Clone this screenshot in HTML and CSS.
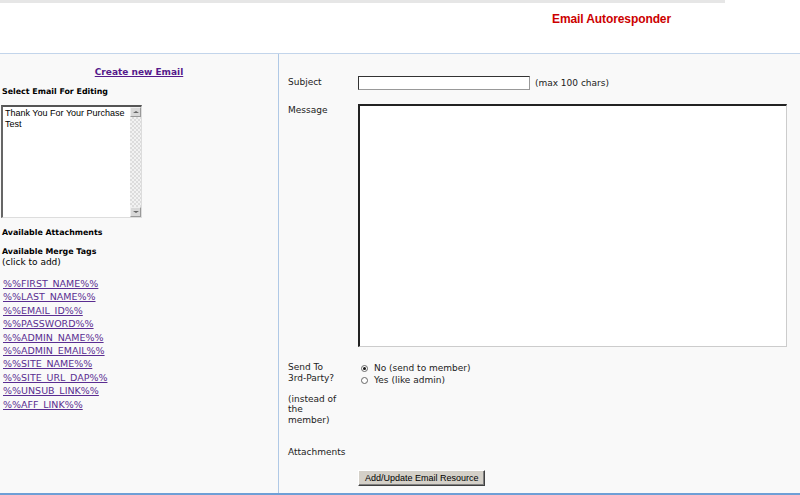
FILE: index.html
```html
<!DOCTYPE html>
<html lang="en">
<head>
  <meta charset="UTF-8" />
  <title>Email Autoresponder</title>
  <link rel="stylesheet" href="styles.css">
</head>
<body>

  <div class="topbar"></div>
  <div class="header">
    <h1>Email Autoresponder</h1>
  </div>

  <div class="main">
    <div class="sidebar">
      <a href="#" class="create-link">Create new Email</a>
      <div class="side-title">Select Email For Editing</div>

      <div class="listbox">
        <div class="list-items">
          <div>Thank You For Your Purchase</div>
          <div>Test</div>
        </div>
        <div class="scrollbar">
          <div class="sb-btn"><span class="arrow-up"></span></div>
          <div class="sb-track"></div>
          <div class="sb-btn"><span class="arrow-down"></span></div>
        </div>
      </div>

      <div class="side-title attach-title">Available Attachments</div>
      <div class="side-title merge-title">Available Merge Tags</div>
      <div class="hint">(click to add)</div>

      <ul class="tags">
        <li><a href="#">%%FIRST_NAME%%</a></li>
        <li><a href="#">%%LAST_NAME%%</a></li>
        <li><a href="#">%%EMAIL_ID%%</a></li>
        <li><a href="#">%%PASSWORD%%</a></li>
        <li><a href="#">%%ADMIN_NAME%%</a></li>
        <li><a href="#">%%ADMIN_EMAIL%%</a></li>
        <li><a href="#">%%SITE_NAME%%</a></li>
        <li><a href="#">%%SITE_URL_DAP%%</a></li>
        <li><a href="#">%%UNSUB_LINK%%</a></li>
        <li><a href="#">%%AFF_LINK%%</a></li>
      </ul>
    </div>

    <form class="editor">
      <div class="row subject-row">
        <label>Subject</label>
        <div class="field">
          <input type="text" class="subject" />
          <span class="note">(max 100 chars)</span>
        </div>
      </div>

      <div class="row message-row">
        <label>Message</label>
        <div class="field">
          <textarea class="message"></textarea>
        </div>
      </div>

      <div class="row send-row">
        <label>Send To <span class="nowrap">3rd-Party?</span><br><br>(instead of the member)</label>
        <div class="field radios">
          <div class="radio"><span class="dot checked"></span>No (send to member)</div>
          <div class="radio"><span class="dot"></span>Yes (like admin)</div>
        </div>
      </div>

      <div class="row attach-row">
        <label>Attachments</label>
      </div>

      <div class="row button-row">
        <label></label>
        <div class="field">
          <button type="submit">Add/Update Email Resource</button>
        </div>
      </div>
    </form>
  </div>

</body>
</html>
```

FILE: styles.css
```css
body {
  margin: 0;
  padding: 0;
  width: 800px;
  height: 495px;
  overflow: hidden;
  font-family: "DejaVu Sans", Verdana, sans-serif;
  font-size: 9px;
  color: #222;
  background: #fff;
}

.topbar {
  width: 725px;
  height: 3px;
  background-color: #e6e6e6;
}

.header {
  height: 50px;
  background: #fff;
}

h1 {
  margin: 0;
  padding: 9px 0 0 552px;
  font-family: "Liberation Sans", Arial, sans-serif;
  font-size: 12px;
  font-weight: bold;
  color: #cc0000;
  letter-spacing: -0.1px;
}

.main {
  display: flex;
  height: 439px;
  border-top: 1px solid #c3d5eb;
  border-bottom: 2px solid #6e9fd6;
  background-color: #f9f9f9;
}

/* left column */
.sidebar {
  width: 278px;
  border-right: 1px solid #b0c9e6;
  padding-top: 13px;
}

.create-link {
  display: block;
  text-align: center;
  font-weight: bold;
  font-size: 9px;
  color: #551a8b;
  line-height: 11px;
}

.side-title {
  font-weight: bold;
  font-size: 7.9px;
  color: #000;
  padding-left: 2px;
  line-height: 11px;
  margin-top: 8px;
}

.listbox {
  display: flex;
  width: 138px;
  height: 110px;
  margin: 8px 0 0 1px;
  border: 1px solid #777;
  border-left: 2px solid #666;
  border-top: 2px solid #555;
  border-right-color: #ddd;
  border-bottom-color: #ddd;
  background: #fff;
}

.list-items {
  flex: 1;
  padding: 1px 0 0 2px;
  font-family: "Liberation Sans", Arial, sans-serif;
  font-size: 9px;
  line-height: 11px;
  color: #000;
  white-space: nowrap;
  overflow: hidden;
}

.scrollbar {
  width: 11px;
  display: flex;
  flex-direction: column;
}

.sb-btn {
  height: 10px;
  background: #d8d8d8;
  border: 1px solid #999;
  border-top-color: #eee;
  border-left-color: #eee;
  box-sizing: border-box;
  display: flex;
  align-items: center;
  justify-content: center;
}

.sb-track {
  flex: 1;
  background-color: #f2f2f2;
  background-image:
    linear-gradient(45deg, #dcdcdc 25%, transparent 25%, transparent 75%, #dcdcdc 75%),
    linear-gradient(45deg, #dcdcdc 25%, transparent 25%, transparent 75%, #dcdcdc 75%);
  background-size: 4px 4px;
  background-position: 0 0, 2px 2px;
}

.arrow-up,
.arrow-down {
  width: 0;
  height: 0;
  border-left: 3px solid transparent;
  border-right: 3px solid transparent;
}

.arrow-up {
  border-bottom: 2px solid #666;
}

.arrow-down {
  border-top: 2px solid #666;
}

.attach-title {
  margin-top: 9px;
}

.merge-title {
  margin-top: 8px;
}

.hint {
  padding-left: 2px;
  font-size: 9px;
  line-height: 11px;
  color: #000;
}

.tags {
  list-style: none;
  margin: 9px 0 0 0;
  padding: 0 0 0 3px;
}

.tags li {
  font-size: 9.5px;
  line-height: 13.4px;
  height: 13.4px;
}

.tags a {
  color: #5a2d91;
}

/* right column */
.editor {
  flex: 1;
  padding: 22px 0 0 9px;
}

.row {
  display: flex;
}

.row label {
  width: 70px;
  flex-shrink: 0;
  line-height: 11px;
  color: #222;
}

.subject-row label {
  padding-top: 1px;
}

.subject {
  width: 172px;
  height: 14px;
  box-sizing: border-box;
  border: 1px solid #999;
  border-top-color: #333;
  border-left-color: #333;
  background: #fff;
  padding: 0;
  margin: 0;
  vertical-align: middle;
}

.note {
  margin-left: 2px;
  vertical-align: middle;
}

.message-row {
  margin-top: 14px;
}

.message-row label {
  padding-top: 1px;
}

.message {
  display: block;
  width: 429px;
  height: 243px;
  box-sizing: border-box;
  margin: 0;
  border: 1px solid #ccc;
  border-top: 2px solid #222;
  border-left: 2px solid #222;
  background: #fff;
  resize: none;
}

.send-row {
  margin-top: 14px;
  height: 80px;
}

.send-row label {
  width: 58px;
  margin-right: 12px;
  padding-top: 1px;
  line-height: 10.5px;
}

.nowrap {
  white-space: nowrap;
}

.radios {
  padding-left: 3px;
  padding-top: 1px;
}

.radio {
  display: flex;
  align-items: center;
  line-height: 12px;
  color: #222;
}

.dot {
  width: 7px;
  height: 7px;
  box-sizing: border-box;
  border-radius: 50%;
  border: 1px solid #666;
  background: #fff;
  margin-right: 6px;
  position: relative;
}

.dot.checked::after {
  content: "";
  position: absolute;
  left: 1px;
  top: 1px;
  width: 3px;
  height: 3px;
  border-radius: 50%;
  background: #111;
}

.attach-row {
  margin-top: 6px;
}

.button-row {
  margin-top: 12px;
}

button[type="submit"] {
  height: 16px;
  padding: 0 5px 0 6px;
  font-family: "Liberation Sans", Arial, sans-serif;
  font-size: 9px;
  color: #000;
  background-color: #d4d0c8;
  border: 1px solid #404040;
  border-top-color: #fff;
  border-left-color: #fff;
  box-shadow: inset -1px -1px 0 #808080;
  cursor: pointer;
}
```
